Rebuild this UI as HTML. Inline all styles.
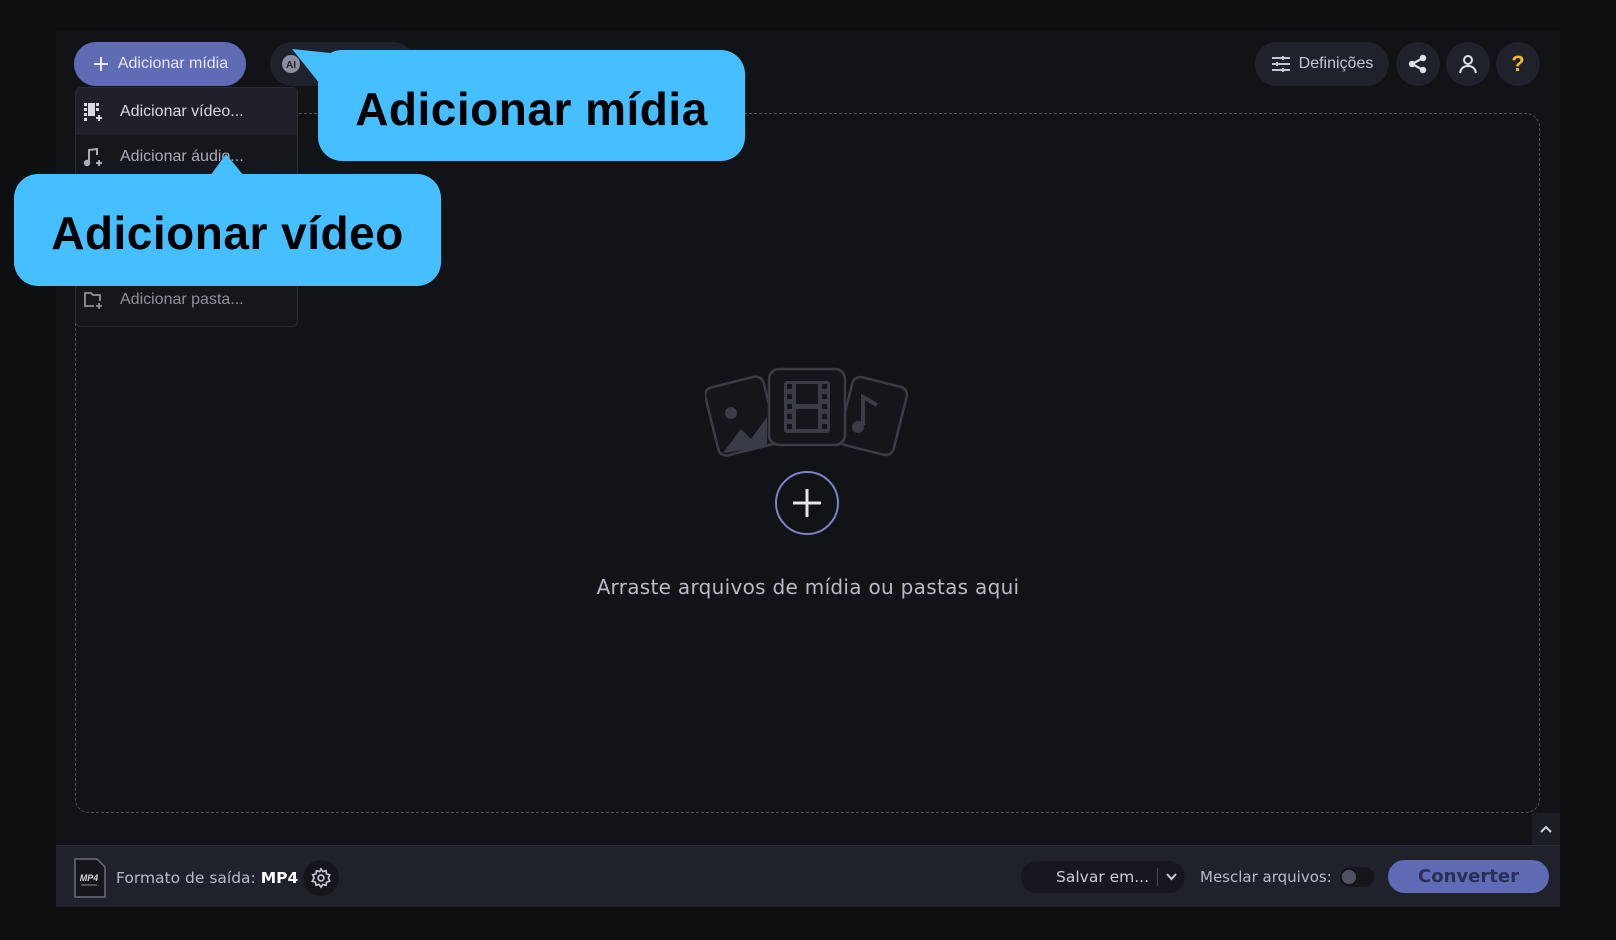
<!DOCTYPE html>
<html><head><meta charset="utf-8"><style>
*{margin:0;padding:0;box-sizing:border-box}
body{width:1616px;height:940px;background:#0e0f11;font-family:"Liberation Sans","DejaVu Sans",sans-serif;position:relative;overflow:hidden;color:#c9ccd6}
.abs{position:absolute}
#panel{left:56px;top:31px;width:1504px;height:876px;background:#121317}
.pill{position:absolute;border-radius:22px;background:#1f212b;display:flex;align-items:center;justify-content:center;font-size:16px;color:#c3c7d4}
.circ{position:absolute;width:44px;height:44px;border-radius:50%;background:#1f212b;display:flex;align-items:center;justify-content:center}
.item{position:absolute;left:0;width:223px;height:43px;display:flex;align-items:center;font-size:16px;color:#d8dae2}
.item svg{position:absolute;left:7px}
.item span{position:absolute;left:44px}
.call{position:absolute;background:#45bfff;border-radius:24px;color:#000;font-weight:bold;font-size:46px;display:flex;align-items:center;justify-content:center;letter-spacing:0.5px;padding-top:6px}
</style></head><body>
<div id="panel" class="abs"></div>
<div class="abs" style="left:75px;top:113px;width:1465px;height:700px;border:1.5px dashed #51545e;border-radius:14px"></div>
<div class="pill" style="left:74px;top:42px;width:172px;height:44px;background:#5f6bb5;color:#e4e6f3;">
<svg width="18" height="18" viewBox="0 0 18 18" style="margin-right:8px"><path d="M9 2v14M2 9h14" stroke="#e8eaf5" stroke-width="2"/></svg>Adicionar mídia</div>
<div class="pill" style="left:270px;top:42px;width:145px;height:44px;justify-content:flex-start;padding-left:10px">
<svg width="22" height="22" viewBox="0 0 22 22"><circle cx="11" cy="11" r="9" fill="#8b8fa0"/><text x="11" y="15" font-size="10" font-weight="bold" text-anchor="middle" fill="#1f212b" font-family="Liberation Sans">AI</text></svg><span style="margin-left:6px">A</span></div>
<div class="abs" style="left:75px;top:87px;width:223px;height:240px;background:#16171c;border:1px solid #2a2c35;border-radius:6px;overflow:hidden">
 <div class="item" style="top:0;height:47px;background:#1f2029"><svg width="20" height="20" viewBox="0 0 20 20" fill="#d8dae2"><rect x="1" y="1" width="3" height="3"/><rect x="1" y="6" width="3" height="3"/><rect x="1" y="11" width="3" height="3"/><rect x="1" y="16" width="3" height="3"/><rect x="5" y="1" width="7" height="13"/><rect x="13" y="1" width="3" height="3"/><rect x="13" y="6" width="3" height="3"/><path d="M13 16h6M16 13v6" stroke="#d8dae2" stroke-width="2"/></svg><span>Adicionar vídeo...</span></div>
 <div class="item" style="top:47px"><svg width="20" height="20" viewBox="0 0 20 20" fill="none" stroke="#a9acb8" stroke-width="2"><path d="M6 16V3l8-1v6"/><circle cx="4" cy="16" r="2.2" fill="#a9acb8"/><path d="M13 16h6M16 13v6"/></svg><span style="color:#a9acb8">Adicionar áudio...</span></div>
 <div class="item" style="top:190px;color:#8e919c"><svg width="20" height="20" viewBox="0 0 20 20" fill="none" stroke="#8e919c" stroke-width="1.8"><path d="M11 16H2V3h6l2 2h7v6"/><path d="M13 16h6M16 13v6"/></svg><span>Adicionar pasta...</span></div>
</div>
<div class="pill" style="left:1255px;top:42px;width:134px;height:44px"><svg width="20" height="18" viewBox="0 0 20 18" style="margin-right:8px" stroke="#c3c7d4" stroke-width="2"><path d="M1 3h18M1 9h18M1 15h18"/><path d="M12 1v4M6 7v4M12 13v4"/></svg>Definições</div>
<div class="circ" style="left:1396px;top:42px"><svg width="22" height="22" viewBox="0 0 22 22"><circle cx="16" cy="5" r="3.2" fill="#e0e2ea"/><circle cx="5" cy="11" r="3.2" fill="#e0e2ea"/><circle cx="16" cy="17" r="3.2" fill="#e0e2ea"/><path d="M16 5L5 11l11 6" stroke="#e0e2ea" stroke-width="2.2" fill="none"/></svg></div>
<div class="circ" style="left:1446px;top:42px"><svg width="22" height="22" viewBox="0 0 22 22" fill="none" stroke="#e0e2ea" stroke-width="2"><circle cx="11" cy="7" r="4"/><path d="M3 20c1-5 4-7 8-7s7 2 8 7"/></svg></div>
<div class="circ" style="left:1496px;top:42px;color:#f2b632;font-weight:bold;font-size:22px">?</div>
<svg class="abs" style="left:705px;top:367px" width="204" height="96" viewBox="0 0 204 96">
 <g fill="none" stroke="#3a3c48" stroke-width="2.5">
  <rect x="6" y="14" width="60" height="70" rx="8" transform="rotate(-14 36 49)" fill="#15161b"/>
  <rect x="140" y="14" width="56" height="70" rx="8" transform="rotate(14 168 49)" fill="#15161b"/>
 </g>
 <circle cx="26" cy="46" r="6" fill="#3a3c48"/><path d="M18 86l18-24 10 10 16-22v30z" fill="#3a3c48"/>
 <path d="M158 58V30l14 8" stroke="#3a3c48" stroke-width="4" fill="none"/><circle cx="153" cy="60" r="6" fill="#3a3c48"/>
 <rect x="64" y="2" width="76" height="76" rx="10" fill="#15161b" stroke="#3a3c48" stroke-width="2.5"/>
 <rect x="79" y="14" width="46" height="52" rx="3" fill="#3a3c48"/>
 <g fill="#15161b"><rect x="82" y="17" width="5" height="5"/><rect x="82" y="27" width="5" height="5"/><rect x="82" y="37" width="5" height="5"/><rect x="82" y="47" width="5" height="5"/><rect x="82" y="57" width="5" height="5"/><rect x="117" y="17" width="5" height="5"/><rect x="117" y="27" width="5" height="5"/><rect x="117" y="37" width="5" height="5"/><rect x="117" y="47" width="5" height="5"/><rect x="117" y="57" width="5" height="5"/><rect x="91" y="17" width="22" height="20"/><rect x="91" y="42" width="22" height="20"/></g>
</svg>
<svg class="abs" style="left:774px;top:470px" width="66" height="66" viewBox="0 0 66 66"><circle cx="33" cy="33" r="31" fill="#121317" stroke="#7d84c4" stroke-width="2"/><path d="M33 19v28M19 33h28" stroke="#e4e6ee" stroke-width="3"/></svg>
<div class="abs" style="left:0;width:1616px;top:575px;text-align:center;font-family:'DejaVu Sans',sans-serif;font-size:20px;letter-spacing:0.3px;color:#b9bcc8">Arraste arquivos de mídia ou pastas aqui</div>
<div class="abs" style="left:1532px;top:813px;width:28px;height:32px;background:#1c1e26;display:flex;align-items:center;justify-content:center"><svg width="12" height="8" viewBox="0 0 12 8"><path d="M1 7l5-5 5 5" stroke="#d0d2da" stroke-width="2" fill="none"/></svg></div>
<div class="abs" style="left:56px;top:845px;width:1504px;height:62px;background:#1f212b;border-top:1px solid #2b2d38"></div>
<svg class="abs" style="left:73px;top:857px" width="34" height="42" viewBox="0 0 34 42"><path d="M2 2h22l8 8v30H2z" fill="#15161b" stroke="#6a6d78" stroke-width="1.5"/><text x="16" y="24" font-size="9" font-weight="bold" fill="#d0d2da" text-anchor="middle" font-family="Liberation Sans" font-style="italic">MP4</text><path d="M8 28h16" stroke="#8a8d98" stroke-width="1"/></svg>
<div class="abs" style="left:116px;top:869px;font-size:15.5px;color:#b8bbc6;font-family:'DejaVu Sans',sans-serif">Formato de saída: <b style="color:#fff">MP4</b></div>
<div class="circ" style="left:303px;top:860px;width:36px;height:36px;background:#15161b"><svg width="22" height="22" viewBox="0 0 24 24" fill="none" stroke="#c3c7d4" stroke-width="1.8"><circle cx="12" cy="12" r="3.2"/><path d="M12 2l2 3 3.5-1 .5 3.5 3.5 1-1.5 3.5 1.5 3.5-3.5 1-.5 3.5-3.5-1-2 3-2-3-3.5 1-.5-3.5-3.5-1L4.5 12 3 8.5l3.5-1L7 4l3.5 1z"/></svg></div>
<div class="abs" style="left:1021px;top:861px;width:164px;height:32px;border-radius:16px;background:#17181f;font-size:15.5px;color:#c9ccd6;font-family:'DejaVu Sans',sans-serif"><span class="abs" style="left:35px;top:7px">Salvar em...</span><div class="abs" style="left:136px;top:7px;width:1px;height:18px;background:#444754"></div><svg class="abs" style="left:145px;top:12px" width="11" height="8" viewBox="0 0 11 8"><path d="M1 1l4.5 5L10 1" stroke="#c9ccd6" stroke-width="2" fill="none"/></svg></div>
<div class="abs" style="left:1200px;top:868px;font-size:15px;color:#b8bbc6;font-family:'DejaVu Sans',sans-serif">Mesclar arquivos:</div>
<div class="abs" style="left:1340px;top:867px;width:34px;height:20px;border-radius:10px;background:#15161b"><div class="abs" style="left:2px;top:3px;width:14px;height:14px;border-radius:50%;background:#50535f"></div></div>
<div class="abs" style="left:1388px;top:860px;width:161px;height:33px;border-radius:17px;background:#5f6bb5;color:#2a2f55;font-weight:bold;font-size:18px;display:flex;align-items:center;justify-content:center;font-family:'DejaVu Sans',sans-serif">Converter</div>
<svg class="abs" style="left:290px;top:46px" width="60" height="40"><path d="M2 3L50 8 30 38z" fill="#45bfff"/></svg>
<div class="call" style="left:318px;top:50px;width:427px;height:111px">Adicionar mídia</div>
<svg class="abs" style="left:200px;top:150px" width="54" height="30"><path d="M26 4L10 26h34z" fill="#45bfff"/></svg>
<div class="call" style="left:14px;top:174px;width:427px;height:112px">Adicionar vídeo</div>
</body></html>
